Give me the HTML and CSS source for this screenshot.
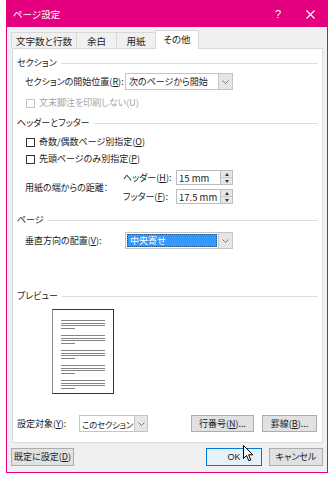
FILE: index.html
```html
<!DOCTYPE html>
<html lang="ja">
<head>
    <meta charset="UTF-8">
    <title>ページ設定</title>
    <link rel="stylesheet" href="styles.css">
</head>
<body>

<div class="dialog">
    <div class="titlebar">
        <span class="title">ページ設定</span>
        <span class="help">?</span>
        <span class="close">
            <svg width="9" height="9" viewBox="0 0 9 9"><path d="M0.5 0.5 L8.5 8.5 M8.5 0.5 L0.5 8.5" stroke="#fff" stroke-width="1.1"/></svg>
        </span>
    </div>

    <div class="content">
        <div class="tabs">
            <div class="tab w1">文字数と行数</div>
            <div class="tab w2">余白</div>
            <div class="tab w3">用紙</div>
            <div class="tab w4 active">その他</div>
        </div>

        <div class="panel">
            <div class="group-title g1"><span>セクション</span></div>
            <div class="field f1">
                <span class="field-label">セクションの開始位置(<u>R</u>):</span>
                <div class="combo">
                    <span class="combo-text">次のページから開始</span>
                    <span class="combo-btn"><svg width="7" height="4" viewBox="0 0 7 4"><path d="M0.5 0.5 L3.5 3.5 L6.5 0.5" stroke="#777" fill="none"/></svg></span>
                </div>
            </div>
            <div class="check disabled c0"><span class="box"></span>文末脚注を印刷しない(U)</div>

            <div class="group-title g2"><span>ヘッダーとフッター</span></div>
            <div class="check c1"><span class="box"></span>奇数/偶数ページ別指定(<u>O</u>)</div>
            <div class="check c2"><span class="box"></span>先頭ページのみ別指定(<u>P</u>)</div>
            <div class="distance">
                <span class="distance-label">用紙の端からの距離：</span>
                <div class="spins">
                    <span class="spin-label">ヘッダー(<u>H</u>):</span>
                    <div class="spin">
                        <span class="spin-text">15 mm</span>
                        <span class="spin-btns"><span class="up"></span><span class="down"></span></span>
                    </div>
                    <span class="spin-label">フッター(<u>F</u>):</span>
                    <div class="spin">
                        <span class="spin-text">17.5 mm</span>
                        <span class="spin-btns"><span class="up"></span><span class="down"></span></span>
                    </div>
                </div>
            </div>

            <div class="group-title g3"><span>ページ</span></div>
            <div class="field f2">
                <span class="field-label">垂直方向の配置(<u>V</u>):</span>
                <div class="combo">
                    <span class="combo-text selected">中央寄せ</span>
                    <span class="combo-btn"><svg width="7" height="4" viewBox="0 0 7 4"><path d="M0.5 0.5 L3.5 3.5 L6.5 0.5" stroke="#777" fill="none"/></svg></span>
                </div>
            </div>

            <div class="group-title g4"><span>プレビュー</span></div>
            <div class="preview">
                <div class="pv-group"><i></i><i></i><i></i><i class="short"></i></div>
                <div class="pv-group"><i></i><i></i><i></i><i class="short"></i></div>
                <div class="pv-group"><i></i><i></i><i></i><i class="short"></i></div>
                <div class="pv-group"><i></i><i></i><i></i><i class="short"></i></div>
                <div class="pv-group"><i></i><i></i><i></i><i class="short"></i></div>
            </div>

            <div class="apply-row">
                <span class="apply-label">設定対象(<u>Y</u>):</span>
                <div class="combo small">
                    <span class="combo-text">このセクション</span>
                    <span class="combo-btn"><svg width="7" height="4" viewBox="0 0 7 4"><path d="M0.5 0.5 L3.5 3.5 L6.5 0.5" stroke="#777" fill="none"/></svg></span>
                </div>
                <span class="spacer"></span>
                <button class="btn line-no">行番号(<u>N</u>)...</button>
                <button class="btn borders">罫線(<u>B</u>)...</button>
            </div>
        </div>

        <div class="footer">
            <button class="btn default">既定に設定(<u>D</u>)</button>
            <span class="spacer"></span>
            <button class="btn ok">OK</button>
            <button class="btn cancel">キャンセル</button>
        </div>
    </div>
</div>

<svg class="cursor" width="11" height="17" viewBox="0 0 11 17">
    <path d="M0.5 0.5 L0.5 13.5 L3.5 10.5 L5.8 15.8 L7.8 15 L5.6 9.8 L9.8 9.8 Z" fill="#fff" stroke="#000" stroke-width="1"/>
</svg>

</body>
</html>
```

FILE: styles.css
```css
* {
    box-sizing: border-box;
}

body {
    margin: 0;
    background-color: #fff;
    font-family: "Noto Sans CJK JP", "Noto Sans", sans-serif;
    font-size: 9px;
    line-height: 12px;
    color: #1a1a1a;
    font-feature-settings: "palt";
    position: relative;
}

u {
    text-decoration: underline;
    text-underline-offset: 1px;
}

.dialog {
    margin-left: 6px;
    width: 322px;
    height: 473px;
    border: 1px solid #e4007f;
    background-color: #f0f0f0;
}

/* タイトルバー */
.titlebar {
    height: 26px;
    background-color: #e4007f;
    color: #fff;
    display: flex;
    align-items: center;
    padding-left: 6px;
}

.titlebar .title {
    flex: 1;
    font-size: 9.5px;
}

.titlebar .help {
    width: 30px;
    text-align: center;
    font-family: "Liberation Sans", sans-serif;
    font-size: 11px;
}

.titlebar .close {
    width: 34px;
    display: flex;
    justify-content: center;
}

.content {
    padding: 3px 4px 0 5px;
}

/* タブ */
.tabs {
    display: flex;
    align-items: flex-end;
    height: 18px;
    margin-left: -1px;
}

.tab {
    height: 16px;
    border: 1px solid #d9d9d9;
    border-bottom: none;
    margin-right: -1px;
    background-color: #f0f0f0;
    display: flex;
    align-items: center;
    justify-content: center;
    font-size: 9.5px;
}

.tab.w1 { width: 66px; }
.tab.w2 { width: 41px; }
.tab.w3 { width: 40px; }
.tab.w4 { width: 44px; }

.tab.active {
    height: 19px;
    margin-bottom: -1px;
    background-color: #fff;
    position: relative;
    z-index: 1;
    padding-bottom: 2px;
}

.panel {
    height: 395px;
    background-color: #fff;
    border: 1px solid #d9d9d9;
    padding: 0 4px;
    display: flex;
    flex-direction: column;
}

.group-title {
    display: flex;
    align-items: center;
    gap: 4px;
    height: 14px;
}

.group-title::after {
    content: "";
    flex: 1;
    height: 1px;
    background-color: #dcdcdc;
}

.g1 { margin-top: 7px; }
.g2 { margin-top: 6px; }
.g3 { margin-top: 9px; }
.g4 { margin-top: 40px; }

.field {
    display: flex;
    align-items: center;
    padding-left: 8px;
    height: 17px;
}

.f1 { margin-top: 3px; }
.f2 { margin-top: 5px; }

.field-label {
    width: 100px;
}

.combo {
    display: flex;
    width: 108px;
    height: 17px;
    border: 1px solid #c4c4c4;
    background-color: #fff;
}

.combo-text {
    flex: 1;
    min-width: 0;
    display: flex;
    align-items: center;
    padding-left: 3px;
    white-space: nowrap;
    overflow: hidden;
}

.combo-text.selected {
    margin: 1px;
    background-color: #3399ff;
    color: #fff;
    outline: 1px dotted #1a4f8a;
    outline-offset: -1px;
}

.combo-btn {
    width: 14px;
    flex-shrink: 0;
    border-left: 1px solid #c4c4c4;
    background-color: #e6e6e6;
    display: flex;
    align-items: center;
    justify-content: center;
}

/* チェックボックス */
.check {
    display: flex;
    align-items: center;
    height: 14px;
    padding-left: 9px;
}

.check .box {
    width: 9px;
    height: 9px;
    border: 1px solid #333;
    margin-right: 4px;
    background-color: #fff;
}

.check.disabled {
    color: #a3a3a3;
}

.check.disabled .box {
    border-color: #c6c6c6;
}

.c0 { margin-top: 6px; }
.c1 { margin-top: 5px; }
.c2 { margin-top: 3px; }

/* 距離 */
.distance {
    display: flex;
    align-items: center;
    margin-top: 4px;
    padding-left: 8px;
}

.distance-label {
    width: 98px;
    padding-top: 2px;
}

.spins {
    display: grid;
    grid-template-columns: 53px 57px;
    row-gap: 4px;
    align-items: center;
}

.spin {
    display: flex;
    height: 15px;
    border: 1px solid #bdbdbd;
}

.spin-text {
    flex: 1;
    display: flex;
    align-items: center;
    padding-left: 2px;
    font-size: 9.5px;
}

.spin-btns {
    width: 12px;
    display: flex;
    flex-direction: column;
    border-left: 1px solid #bdbdbd;
    background-color: #e6e6e6;
}

.spin-btns span {
    flex: 1;
    display: flex;
    align-items: center;
    justify-content: center;
}

.spin-btns .up {
    border-bottom: 1px solid #c8c8c8;
}

.spin-btns .up::before {
    content: "";
    border-left: 2.5px solid transparent;
    border-right: 2.5px solid transparent;
    border-bottom: 3px solid #333;
}

.spin-btns .down::before {
    content: "";
    border-left: 2.5px solid transparent;
    border-right: 2.5px solid transparent;
    border-top: 3px solid #333;
}

/* プレビュー */
.preview {
    margin-top: 6px;
    margin-left: 35px;
    width: 62px;
    height: 85px;
    border: 1px solid #333;
    border-left-color: #8a8a8a;
    padding: 10px 0 0 8px;
}

.pv-group {
    height: 15px;
}

.pv-group i {
    display: block;
    width: 44px;
    height: 1px;
    margin-bottom: 1.7px;
    background-color: #858585;
}

.pv-group i.short {
    width: 14px;
}

.apply-row {
    display: flex;
    align-items: center;
    margin-top: 21px;
    height: 17px;
}

.apply-label {
    width: 62px;
}

.combo.small {
    width: 69px;
}

.combo.small .combo-text {
    padding-left: 2px;
    font-size: 8.5px;
    letter-spacing: -0.3px;
}

.combo.small .combo-btn {
    width: 13px;
}

.spacer {
    flex: 1;
}

/* ボタン */
.btn {
    font: inherit;
    color: inherit;
    height: 17px;
    padding: 0;
    border: 1px solid #adadad;
    background-color: #e1e1e1;
    display: flex;
    align-items: center;
    justify-content: center;
}

.line-no { width: 63px; margin-right: 8px; }
.borders { width: 55px; margin-right: 1px; }

.footer {
    display: flex;
    align-items: center;
    margin-top: 5px;
}

.footer .btn {
    height: 18px;
}

.default { width: 63px; margin-left: -1px; }
.ok {
    width: 56px;
    margin-right: 7px;
    background-color: #e5f1fb;
    border-color: #0078d7;
    font-family: "Liberation Sans", sans-serif;
    font-size: 9px;
}
.cancel { width: 54px; }

.cursor {
    position: absolute;
    left: 243px;
    top: 445px;
}
```
